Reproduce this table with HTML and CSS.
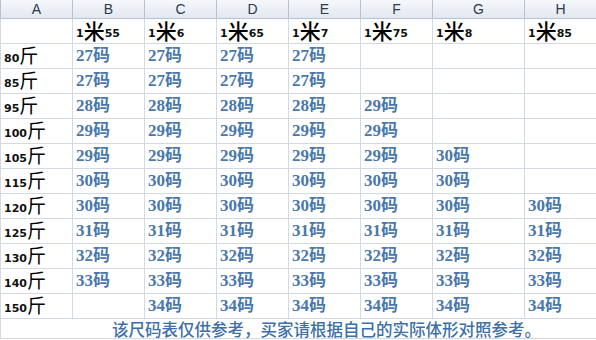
FILE: index.html
```html
<!DOCTYPE html>
<html lang="zh">
<head>
<meta charset="utf-8">
<link rel="stylesheet" href="styles.css">
</head>
<body>
<table class="sheet">
  <colgroup>
    <col class="c72"><col class="c72"><col class="c72"><col class="c72"><col class="c72"><col class="c72"><col class="c92"><col class="c72">
  </colgroup>
  <thead>
    <tr class="hdr"><th>A</th><th>B</th><th>C</th><th>D</th><th>E</th><th>F</th><th>G</th><th>H</th></tr>
  </thead>
  <tbody>
    <tr class="r1">
      <td></td>
      <td><span class="n">1</span><span class="big">米</span><span class="n">55</span></td>
      <td><span class="n">1</span><span class="big">米</span><span class="n">6</span></td>
      <td><span class="n">1</span><span class="big">米</span><span class="n">65</span></td>
      <td><span class="n">1</span><span class="big">米</span><span class="n">7</span></td>
      <td><span class="n">1</span><span class="big">米</span><span class="n">75</span></td>
      <td><span class="n">1</span><span class="big">米</span><span class="n">8</span></td>
      <td><span class="n">1</span><span class="big">米</span><span class="n">85</span></td>
    </tr>
    <tr><td class="lbl"><span class="n">80</span><span class="jin">斤</span></td><td class="v">27码</td><td class="v">27码</td><td class="v">27码</td><td class="v">27码</td><td></td><td></td><td></td></tr>
    <tr><td class="lbl"><span class="n">85</span><span class="jin">斤</span></td><td class="v">27码</td><td class="v">27码</td><td class="v">27码</td><td class="v">27码</td><td></td><td></td><td></td></tr>
    <tr><td class="lbl"><span class="n">95</span><span class="jin">斤</span></td><td class="v">28码</td><td class="v">28码</td><td class="v">28码</td><td class="v">28码</td><td class="v">29码</td><td></td><td></td></tr>
    <tr><td class="lbl"><span class="n">100</span><span class="jin">斤</span></td><td class="v">29码</td><td class="v">29码</td><td class="v">29码</td><td class="v">29码</td><td class="v">29码</td><td></td><td></td></tr>
    <tr><td class="lbl"><span class="n">105</span><span class="jin">斤</span></td><td class="v">29码</td><td class="v">29码</td><td class="v">29码</td><td class="v">29码</td><td class="v">29码</td><td class="v">30码</td><td></td></tr>
    <tr><td class="lbl"><span class="n">115</span><span class="jin">斤</span></td><td class="v">30码</td><td class="v">30码</td><td class="v">30码</td><td class="v">30码</td><td class="v">30码</td><td class="v">30码</td><td></td></tr>
    <tr><td class="lbl"><span class="n">120</span><span class="jin">斤</span></td><td class="v">30码</td><td class="v">30码</td><td class="v">30码</td><td class="v">30码</td><td class="v">30码</td><td class="v">30码</td><td class="v">30码</td></tr>
    <tr><td class="lbl"><span class="n">125</span><span class="jin">斤</span></td><td class="v">31码</td><td class="v">31码</td><td class="v">31码</td><td class="v">31码</td><td class="v">31码</td><td class="v">31码</td><td class="v">31码</td></tr>
    <tr><td class="lbl"><span class="n">130</span><span class="jin">斤</span></td><td class="v">32码</td><td class="v">32码</td><td class="v">32码</td><td class="v">32码</td><td class="v">32码</td><td class="v">32码</td><td class="v">32码</td></tr>
    <tr><td class="lbl"><span class="n">140</span><span class="jin">斤</span></td><td class="v">33码</td><td class="v">33码</td><td class="v">33码</td><td class="v">33码</td><td class="v">33码</td><td class="v">33码</td><td class="v">33码</td></tr>
    <tr><td class="lbl"><span class="n">150</span><span class="jin">斤</span></td><td></td><td class="v">34码</td><td class="v">34码</td><td class="v">34码</td><td class="v">34码</td><td class="v">34码</td><td class="v">34码</td></tr>
    <tr class="foot"><td colspan="8">该尺码表仅供参考，买家请根据自己的实际体形对照参考。</td></tr>
  </tbody>
</table>
</body>
</html>
```

FILE: styles.css
```css
html, body {
  margin: 0;
  padding: 0;
  background: #ffffff;
  overflow: hidden;
}
.sheet {
  border-collapse: collapse;
  table-layout: fixed;
  width: 596px;
  font-family: "Liberation Sans", "Noto Sans CJK SC", sans-serif;
}
.c72 { width: 72px; }
.c92 { width: 92px; }
.sheet th,
.sheet td {
  border: 1px solid #d3d9e4;
  padding: 0 0 0 3px;
  white-space: nowrap;
  text-align: left;
  vertical-align: middle;
  line-height: 16px;
}
.hdr th {
  height: 18px;
  padding: 0;
  text-align: center;
  font-weight: normal;
  font-size: 14px;
  color: #2b3a4c;
  background: linear-gradient(#f5f7fb, #e2e8f0);
  border-color: #b8c2d2;
  border-top: none;
}
.sheet tbody td { height: 24px; }
.n {
  font-family: "DejaVu Sans", sans-serif;
  font-weight: bold;
  font-size: 11px;
  line-height: 14px;
  color: #111;
}
.big {
  font-family: "Noto Sans CJK SC", sans-serif;
  font-size: 21px;
  font-weight: 500;
  line-height: 16px;
  color: #000;
  vertical-align: -2px;
}
.jin {
  font-family: "Noto Sans CJK SC", sans-serif;
  font-size: 19px;
  line-height: 16px;
  color: #000;
  vertical-align: -1px;
}
.v {
  font-family: "Liberation Serif", "Noto Sans CJK SC", serif;
  font-weight: bold;
  font-size: 17px;
  color: #4a78aa;
}
.sheet .foot td {
  height: 19px;
  padding-left: 111px;
  font-family: "Noto Sans CJK SC", sans-serif;
  font-size: 16.5px;
  font-weight: 500;
  color: #3d70a8;
}
```
